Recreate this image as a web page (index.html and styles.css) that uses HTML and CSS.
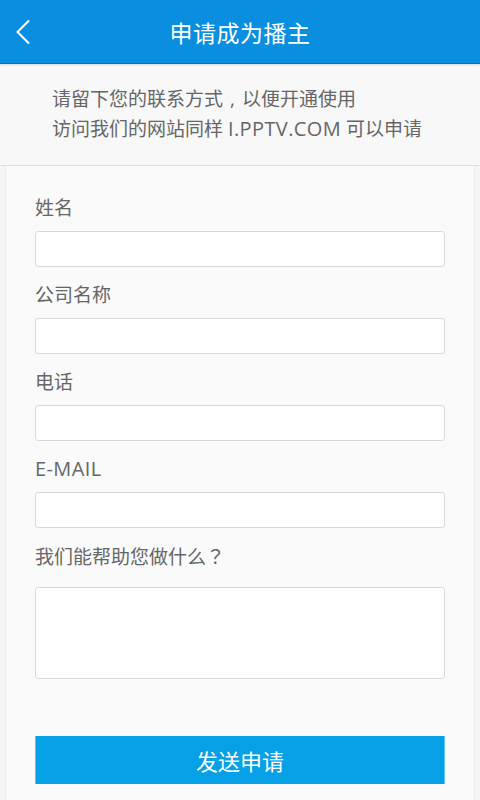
FILE: index.html
```html
<!DOCTYPE html>
<html lang="zh-CN">
<head>
    <meta charset="UTF-8">
    <title>申请成为播主</title>
    <link rel="stylesheet" href="styles.css">
</head>
<body>
<div class="header">
    <a class="back" href="#">
        <svg width="16" height="26" viewBox="0 0 16 26">
            <path d="M14 1.5 L2.5 13 L14 24.5" fill="none" stroke="#fff" stroke-width="2"/>
        </svg>
    </a>
    <h1>申请成为播主</h1>
</div>
<div class="intro">
    <p>请留下您的联系方式<span class="comma">,</span>以便开通使用</p>
    <p>访问我们的网站同样 <span class="en">I.PPTV.COM</span> 可以申请</p>
</div>
<div class="form">
    <div class="field">
        <label>姓名</label>
        <input type="text">
    </div>
    <div class="field">
        <label>公司名称</label>
        <input type="text">
    </div>
    <div class="field">
        <label>电话</label>
        <input type="text">
    </div>
    <div class="field">
        <label><span class="en">E-MAIL</span></label>
        <input type="text">
    </div>
    <div class="field">
        <label>我们能帮助您做什么<span class="punc" lang="zh-TW">？</span></label>
        <textarea></textarea>
    </div>
    <button class="submit">发送申请</button>
</div>
</body>
</html>
```

FILE: styles.css
```css
*{
    box-sizing: border-box;
}
body{
    margin: 0;
    background: #f5f5f5;
    font-family: "Open Sans", "Noto Sans CJK SC", sans-serif;
    color: #666;
}
/*全角标点居中显示*/
.punc{
    font-family: "Noto Sans CJK TC", sans-serif;
}
.comma{
    display: inline-block;
    width: 1em;
    text-align: center;
}
.en{
    font-size: 20px;
    letter-spacing: 0.4px;
}
.header{
    position: relative;
    height: 64px;
    background: #0a8ee0;
    border-bottom: 1px solid #0873b8;
    box-shadow: 0 1px 2px rgba(0,0,0,0.15);
    display: flex;
    align-items: center;
    justify-content: center;
}
.header h1{
    margin: 0;
    font-size: 23px;
    font-weight: normal;
    color: #fff;
    letter-spacing: 0.5px;
}
/*返回按钮压在标题栏左边*/
.back{
    position: absolute;
    left: 15px;
    top: 19px;
    display: block;
    width: 16px;
    height: 26px;
}
.intro{
    background: #f8f8f8;
    padding: 20px 0 21px 52px;
    border-bottom: 1px solid #dedede;
}
.intro p{
    margin: 0;
    font-size: 19px;
    line-height: 30px;
    height: 30px;
    color: #666;
}
.form{
    margin: 0 5px;
    border-left: 1px solid #ececec;
    border-right: 1px solid #ececec;
    background: #fafafa;
    padding: 28px 29px 30px;
    min-height: 640px;
}
.field label{
    display: block;
    font-size: 19px;
    line-height: 28px;
    height: 37px;
    color: #666;
}
.field{
    margin-bottom: 14px;
}
.field input,
.field textarea{
    display: block;
    width: 100%;
    height: 36px;
    border: 1px solid #d9d9d9;
    border-radius: 3px;
    background: #fff;
    outline: none;
    font-size: 16px;
    font-family: inherit;
}
.field textarea{
    height: 92px;
    resize: none;
    margin-top: 8px;
}
.submit{
    display: block;
    width: 100%;
    height: 48px;
    margin-top: 57px;
    border: none;
    border-left: 1px solid #5cc4f5;
    border-right: 1px solid #5cc4f5;
    background: #05a0e6;
    color: #fff;
    font-size: 22px;
    font-family: inherit;
}
```
